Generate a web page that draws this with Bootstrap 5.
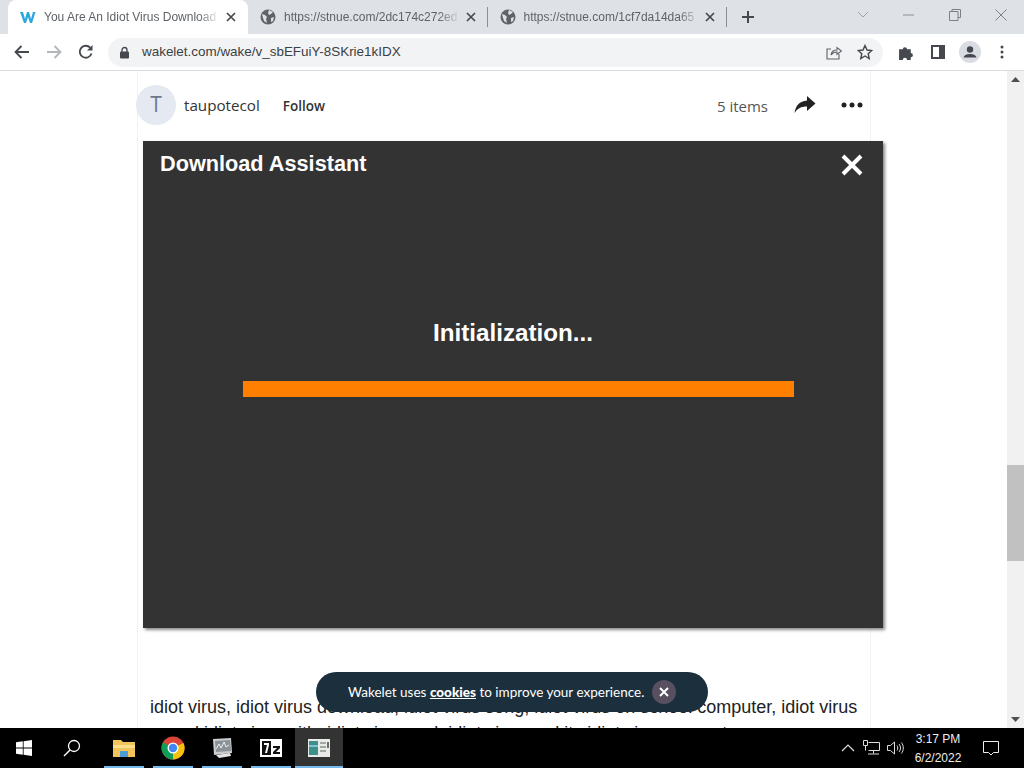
<!DOCTYPE html>
<html lang="en">
<head>
<meta charset="UTF-8">
<title>You Are An Idiot Virus Download</title>
<link href="https://cdn.jsdelivr.net/npm/bootstrap@5.3.0/dist/css/bootstrap.min.css" rel="stylesheet">
<style>
html, body { height: 768px; overflow: hidden; }
body { font-family: "Liberation Sans", Arial, sans-serif; background: #fff; width: 1024px; }

/* browser tabs */
.tabstrip { height: 34px; background: #dee1e6; padding-left: 8px; }
.tabx { width: 239.5px; height: 34px; padding: 0 12px 0 12px; color: #5f6368; font-size: 12px; }
.tabx.active-tab { background: #fff; border-radius: 8px 8px 0 0; width: 240px; }
.tab-label { width: 176px; margin-left: 8px; white-space: nowrap; overflow: hidden; -webkit-mask-image: linear-gradient(to right, #000 88%, transparent); mask-image: linear-gradient(to right, #000 88%, transparent); }
.tab-sep { width: 1px; height: 20px; background: #8a8d91; margin-left: -1px; }
.new-tab { width: 42px; height: 34px; }
.win-btns { margin-left: auto; color: #80868b; }
.win-btn { width: 46px; height: 30px; }

/* toolbar */
.toolbar { height: 37px; background: #fff; border-bottom: 1px solid #dadce0; padding: 0 6px; }
.tool-btn { width: 32px; height: 32px; flex: none; }
.omnibox { height: 29px; width: 776px; margin-left: 6px; background: #f1f3f4; border-radius: 15px; padding: 0 9px 0 11px; font-size: 13.45px; color: #202124; margin-right: 7px; }
.url-text { margin-left: 12px; color: #3c4043; }
.star-icon { margin: 0 1px 0 15px; }

/* page */
.viewport { height: 657px; overflow: hidden; }
.page-col { width: 1007px; height: 657px; overflow: hidden; }
.scroll-rail { width: 17px; background: #f1f1f1; }
.scroll-thumb { height: 96px; margin-top: 377px; background: #c1c1c1; }
.scroll-arrow { height: 17px; }
.wake-wrap { width: 734px; margin-left: 137px; border-left: 1px solid #f2f2f2; border-right: 1px solid #f2f2f2; height: 657px; }
.wake-head { height: 70px; width: 744px; margin-left: -2px; padding-top: 14px; }
.avatar-t { width: 40px; height: 40px; border-radius: 50%; background: #e4e9f2; color: #6b7a90; font-size: 21px; font-family: "Open Sans", sans-serif; }
.owner-row { height: 40px; }
.owner { font-size: 15.2px; color: #333; margin-left: 8px; font-family: "Open Sans", sans-serif; }
.follow { font-size: 13.5px; font-weight: 600; color: #333; margin: 3px 0 0 23px; font-family: "Open Sans", sans-serif; }
.item-count { height: 42px; font-size: 15px; color: #555; font-family: "Open Sans", sans-serif; margin-left: auto; margin-right: 26px; }
.head-end { height: 40px; width: 86px; }
.more-icon { margin-left: 25px; }

.assistant { width: 740px; height: 487px; margin-left: 5px; background: #333; box-shadow: 2px 2px 3px #888; color: #fff; padding: 10px 17px; }
.assistant-title { font-size: 21.7px; font-weight: 700; line-height: 26px; }
.assistant-close { margin: 3px 3px 0 0; }
.assistant-body { padding-top: 141px; }
.init-text { font-size: 24.2px; font-weight: 700; line-height: 30px; text-align: center; }
.orange-bar { width: 551px; height: 16px; background: #ff8000; margin: 33px 0 0 83px; }

.wake-text { font-size: 18px; line-height: 26px; color: #222; padding: 66px 12px 0 12px; margin: 0; width: 734px; white-space: nowrap; }

/* cookie toast */
.cookie-pill { position: absolute; left: 316px; top: 672px; width: 392px; height: 40px; border-radius: 20px; background: #1b2f3d; color: #fff; font-size: 13.5px; font-family: Lato, "Open Sans", sans-serif; padding-left: 32px; white-space: nowrap; }
.cookie-pill b { text-decoration: underline; font-weight: 900; }
.cookie-x { width: 24px; height: 24px; border-radius: 50%; background: #584f60; margin-left: 8px; flex: none; }

/* windows taskbar */
.taskbar { height: 40px; background: #000; color: #fff; }
.task-btn { width: 48px; height: 40px; flex: none; position: relative; }
.task-btn.running { width: 49px; }
.task-btn.running::after { content: ""; position: absolute; left: 5px; right: 4px; bottom: 0; height: 2px; background: #76b9ed; }
.task-btn.first-pin { margin-left: 3px; }
.task-btn.current { background: #333; width: 48px; }
.task-btn.current::after { left: 0; right: 0; }
.tray-net { margin-left: 8px; }
.tray-vol { margin-left: 7px; }
.clock { font-size: 12px; line-height: 19px; width: 60px; margin: 1px 0 0 4px; text-align: center; color: #eee; }
.notify-btn { width: 46px; margin-right: 10px; }
</style>
</head>
<body>

<div class="tabstrip d-flex align-items-end">
  <div class="tabx active-tab d-flex align-items-center">
    <svg width="16" height="14" viewBox="0 0 16 14"><path d="M0 2h3l2 7 2-7h2l2 7 2-7h2.500l-3.500 11h-2l-2-6-2 6h-2z" fill="#2aa6e0"/></svg>
    <span class="tab-label">You Are An Idiot Virus Download</span>
    <svg class="ms-auto" width="10" height="10" viewBox="0 0 10 10"><path d="M1 1l8 8M9 1l-8 8" stroke="#45494e" stroke-width="1.700"/></svg>
  </div>
  <div class="tabx d-flex align-items-center">
    <svg width="16" height="16" viewBox="0 0 16 16"><circle cx="8" cy="8" r="7.500" fill="#5f6368"/><path d="M2 5l3 1 2 2-1 2 1 4-3-2-1-3zM9 1l4 2-2 2-2 1-1-2zM11 9l3-1-1 4-2 1z" fill="#dee1e6"/></svg>
    <span class="tab-label">https://stnue.com/2dc174c272ed</span>
    <svg class="ms-auto" width="10" height="10" viewBox="0 0 10 10"><path d="M1 1l8 8M9 1l-8 8" stroke="#45494e" stroke-width="1.700"/></svg>
  </div>
  <div class="tab-sep align-self-center"></div>
  <div class="tabx d-flex align-items-center">
    <svg width="16" height="16" viewBox="0 0 16 16"><circle cx="8" cy="8" r="7.500" fill="#5f6368"/><path d="M2 5l3 1 2 2-1 2 1 4-3-2-1-3zM9 1l4 2-2 2-2 1-1-2zM11 9l3-1-1 4-2 1z" fill="#dee1e6"/></svg>
    <span class="tab-label">https://stnue.com/1cf7da14da65</span>
    <svg class="ms-auto" width="10" height="10" viewBox="0 0 10 10"><path d="M1 1l8 8M9 1l-8 8" stroke="#45494e" stroke-width="1.700"/></svg>
  </div>
  <div class="tab-sep align-self-center"></div>
  <div class="new-tab d-flex align-items-center justify-content-center">
    <svg width="14" height="14" viewBox="0 0 14 14"><path d="M7 1v12M1 7h12" stroke="#45494e" stroke-width="2"/></svg>
  </div>
  <div class="win-btns d-flex align-self-start">
    <div class="win-btn d-flex align-items-center justify-content-center"><svg width="12" height="8" viewBox="0 0 12 8"><path d="M1 1l5 5 5-5" fill="none" stroke="#a0a4a9"/></svg></div>
    <div class="win-btn d-flex align-items-center justify-content-center"><svg width="12" height="2" viewBox="0 0 12 2"><path d="M0 1h11" stroke="#8a8e93"/></svg></div>
    <div class="win-btn d-flex align-items-center justify-content-center"><svg width="12" height="12" viewBox="0 0 12 12"><path d="M.500 2.500h8.500v9h-8.500zM3 2.500v-2h8.500v8h-2.500" fill="none" stroke="#7d8186"/></svg></div>
    <div class="win-btn d-flex align-items-center justify-content-center"><svg width="12" height="12" viewBox="0 0 12 12"><path d="M.500.500l11 11M11.500.500l-11 11" stroke="#7d8186"/></svg></div>
  </div>
</div>

<div class="toolbar d-flex align-items-center">
  <div class="tool-btn d-flex align-items-center justify-content-center"><svg width="16" height="14" viewBox="0 0 16 14"><path d="M15 7H2M7.500 1L1.500 7l6 6" fill="none" stroke="#45494e" stroke-width="1.800"/></svg></div>
  <div class="tool-btn d-flex align-items-center justify-content-center"><svg width="16" height="14" viewBox="0 0 16 14"><path d="M1 7h13M8.500 1l6 6-6 6" fill="none" stroke="#b4b7ba" stroke-width="1.800"/></svg></div>
  <div class="tool-btn d-flex align-items-center justify-content-center"><svg width="16" height="16" viewBox="0 0 16 16"><path d="M13.500 9.500A6 6 0 1 1 12.200 3.700" fill="none" stroke="#45494e" stroke-width="1.800"/><path d="M14.500 1v5.500h-5.500z" fill="#45494e"/></svg></div>
  <div class="omnibox d-flex align-items-center">
    <svg width="11" height="13" viewBox="0 0 11 13"><path d="M3 6V4a2.500 2.500 0 0 1 5 0v2" fill="none" stroke="#45494e" stroke-width="1.300"/><rect x="1" y="5.500" width="9" height="7" rx="1" fill="#45494e"/></svg>
    <span class="url-text">wakelet.com/wake/v_sbEFuiY-8SKrie1kIDX</span>
    <svg class="ms-auto" width="16" height="15" viewBox="0 0 16 15"><path d="M13 9v5H1V4h4" fill="none" stroke="#5f6368" stroke-width="1.100"/><path d="M5 10c.5-3.500 3-5 6-5V2.500L15.500 6 11 9.500V7c-2.500 0-4.500 1-6 3z" fill="none" stroke="#5f6368" stroke-width="1.100"/></svg>
    <svg class="star-icon" width="16" height="16" viewBox="0 0 16 16"><path d="M8 1.500l2 4.500 4.800.500-3.600 3.200 1 4.800L8 12l-4.200 2.500 1-4.800L1.200 6.500 6 6z" fill="none" stroke="#45494e" stroke-width="1.400"/></svg>
  </div>
  <div class="tool-btn d-flex align-items-center justify-content-center"><svg width="17" height="17" viewBox="0 0 16 16"><path d="M1 5h3.500a2 2 0 1 1 4 0H12v3.500a2 2 0 1 1 0 4V15H8.500a2 2 0 1 0-4 0H1z" fill="#45494e"/></svg></div>
  <div class="tool-btn d-flex align-items-center justify-content-center"><svg width="14" height="14" viewBox="0 0 14 14"><path d="M1 1h12v12H1z" fill="none" stroke="#45494e" stroke-width="2"/><path d="M8 1h5v12H8z" fill="#45494e"/></svg></div>
  <div class="tool-btn d-flex align-items-center justify-content-center"><svg width="22" height="22" viewBox="0 0 22 22"><circle cx="11" cy="11" r="11" fill="#d9dde3"/><circle cx="11" cy="8.500" r="3.200" fill="#45494e"/><path d="M4.500 16.500c1-3 4-3.500 6.500-3.500s5.500.5 6.500 3.500z" fill="#45494e"/></svg></div>
  <div class="tool-btn d-flex align-items-center justify-content-center"><svg width="4" height="14" viewBox="0 0 4 14"><circle cx="2" cy="2" r="1.500" fill="#45494e"/><circle cx="2" cy="7" r="1.500" fill="#45494e"/><circle cx="2" cy="12" r="1.500" fill="#45494e"/></svg></div>
</div>

<div class="viewport d-flex">
  <div class="page-col">
    <div class="wake-wrap">
      <div class="wake-head d-flex align-items-start">
        <div class="avatar-t d-flex align-items-center justify-content-center">T</div>
        <div class="owner-row d-flex align-items-center">
          <span class="owner">taupotecol</span>
          <span class="follow">Follow</span>
        </div>
        <span class="item-count d-flex align-items-center">5 items</span>
        <div class="head-end d-flex align-items-center">
          <svg width="22" height="18" viewBox="0 0 22 18"><path d="M13 0l8.500 7.500L13 15v-4.500C7 10.500 3.500 12.500.500 17 1.500 10 5.500 5 13 4.500z" fill="#222"/></svg>
          <svg class="more-icon" width="22" height="6" viewBox="0 0 22 6"><circle cx="3" cy="3" r="2.500" fill="#222"/><circle cx="11" cy="3" r="2.500" fill="#222"/><circle cx="19" cy="3" r="2.500" fill="#222"/></svg>
        </div>
      </div>
      <div class="assistant">
        <div class="d-flex justify-content-between align-items-start">
          <div class="assistant-title">Download Assistant</div>
          <svg class="assistant-close" width="22" height="22" viewBox="0 0 22 22"><path d="M2 2l18 18M20 2L2 20" stroke="#fff" stroke-width="4"/></svg>
        </div>
        <div class="assistant-body">
          <div class="init-text">Initialization...</div>
          <div class="orange-bar"></div>
        </div>
      </div>
      <p class="wake-text">idiot virus, idiot virus download, idiot virus song, idiot virus on school computer, idiot virus<br>sound idiot virus with, idiot virus and, idiot virus and its idiot virus exempt</p>
    </div>
  </div>
  <div class="scroll-rail d-flex flex-column">
    <div class="scroll-arrow d-flex align-items-center justify-content-center"><svg width="9" height="5" viewBox="0 0 9 5"><path d="M4.500 0L9 5H0z" fill="#505050"/></svg></div>
    <div class="scroll-thumb"></div>
    <div class="scroll-arrow mt-auto d-flex align-items-center justify-content-center"><svg width="9" height="5" viewBox="0 0 9 5"><path d="M4.500 5L9 0H0z" fill="#505050"/></svg></div>
  </div>
</div>

<div class="cookie-pill d-flex align-items-center">
  <span>Wakelet uses <b>cookies</b> to improve your experience.</span>
  <span class="cookie-x d-flex align-items-center justify-content-center"><svg width="10" height="10" viewBox="0 0 10 10"><path d="M1 1l8 8M9 1l-8 8" stroke="#fff" stroke-width="2"/></svg></span>
</div>

<div class="taskbar d-flex align-items-center">
  <div class="task-btn d-flex align-items-center justify-content-center"><svg width="16" height="16" viewBox="0 0 16 16"><path d="M0 2.300l6.800-1v6.300H0zM7.600 1.200L16 0v7.600H7.600zM0 8.400h6.800v6.300l-6.800-1zM7.600 8.400H16V16l-8.400-1.200z" fill="#fff"/></svg></div>
  <div class="task-btn d-flex align-items-center justify-content-center"><svg width="18" height="18" viewBox="0 0 18 18"><circle cx="11" cy="7" r="5.500" fill="none" stroke="#fff" stroke-width="1.300"/><path d="M7 11l-6 6" stroke="#fff" stroke-width="1.500"/></svg></div>
  <div class="task-btn running first-pin d-flex align-items-center justify-content-center"><svg width="22" height="18" viewBox="0 0 22 18"><path d="M0 1h8l2 2h12v15H0z" fill="#f2c55c"/><path d="M0 6h22v3H0z" fill="#ffe08a"/><path d="M7 12h8v6H7z" fill="#4d9bd6"/></svg></div>
  <div class="task-btn running d-flex align-items-center justify-content-center"><svg width="24" height="24" viewBox="0 0 24 24"><circle cx="12" cy="12" r="11.500" fill="#db4437"/><path d="M12 12L22.500 7A11.500 11.500 0 0 1 12 23.500z" fill="#f4c20d"/><path d="M12 12l-10 -5.700A11.500 11.500 0 0 0 12 23.500z" fill="#0f9d58"/><circle cx="12" cy="12" r="5.500" fill="#fff"/><circle cx="12" cy="12" r="4.200" fill="#4285f4"/></svg></div>
  <div class="task-btn running d-flex align-items-center justify-content-center"><svg width="24" height="24" viewBox="0 0 24 24"><path d="M3 3l18-1 1 15-18 2z" fill="#c9cdd0"/><path d="M5 5l15-1 1 11-15 1z" fill="#8a9298"/><path d="M6 13l3-5 2 4 3-6 2 5 3-2" fill="none" stroke="#eee"/><path d="M6 19l14-2 1 3-12 2z" fill="#e3e5e6"/></svg></div>
  <div class="task-btn running d-flex align-items-center justify-content-center"><svg width="22" height="18" viewBox="0 0 22 18"><path d="M0 0h22v18H0z" fill="#fff"/><path d="M2 2h9v14H2z" fill="#111"/><path d="M4 4h5v2l-2 8H5l2-8H4z" fill="#fff"/><path d="M13 7h7v2l-4 4h4v2h-7v-2l4-4h-4z" fill="#111"/></svg></div>
  <div class="task-btn running current d-flex align-items-center justify-content-center"><svg width="22" height="18" viewBox="0 0 22 18"><path d="M0 0h22v18H0z" fill="#e8ebe6"/><path d="M1 2h9v14H1z" fill="#3d8f8a"/><path d="M1 6h9v2H1z" fill="#86c0d8"/><path d="M12 4h6M12 8h6M12 12h6" stroke="#8c9490" stroke-width="1.500"/><path d="M20 3v6" stroke="#444" stroke-width="1.500"/></svg></div>

  <div class="ms-auto d-flex align-items-center">
    <svg width="14" height="8" viewBox="0 0 14 8"><path d="M1 7l6-6 6 6" fill="none" stroke="#ddd" stroke-width="1.200"/></svg>
    <svg class="tray-net" width="17" height="16" viewBox="0 0 17 16"><path d="M5.500 2.500h11v8h-11M.500 .500h4v5h-4zM2.500 5.500v5M10.500 10.500v3M5 14h11" fill="none" stroke="#ddd"/></svg>
    <svg class="tray-vol" width="17" height="14" viewBox="0 0 17 14"><path d="M.500 4.500h3l4-3.500v12l-4-3.500h-3zM10 4.500c1 1.500 1 3.500 0 5M12 3c2 2.500 2 5.500 0 8M14.300 1.500c2.700 3 2.700 8 0 11" fill="none" stroke="#ddd"/></svg>
    <div class="clock">3:17 PM<br>6/2/2022</div>
    <div class="notify-btn d-flex align-items-center justify-content-center">
      <svg width="16" height="15" viewBox="0 0 16 15"><path d="M.500 .500h15v11h-5l-2.500 2.500-2.500-2.500h-5z" fill="none" stroke="#eee"/></svg>
    </div>
  </div>
</div>

</body>
</html>
